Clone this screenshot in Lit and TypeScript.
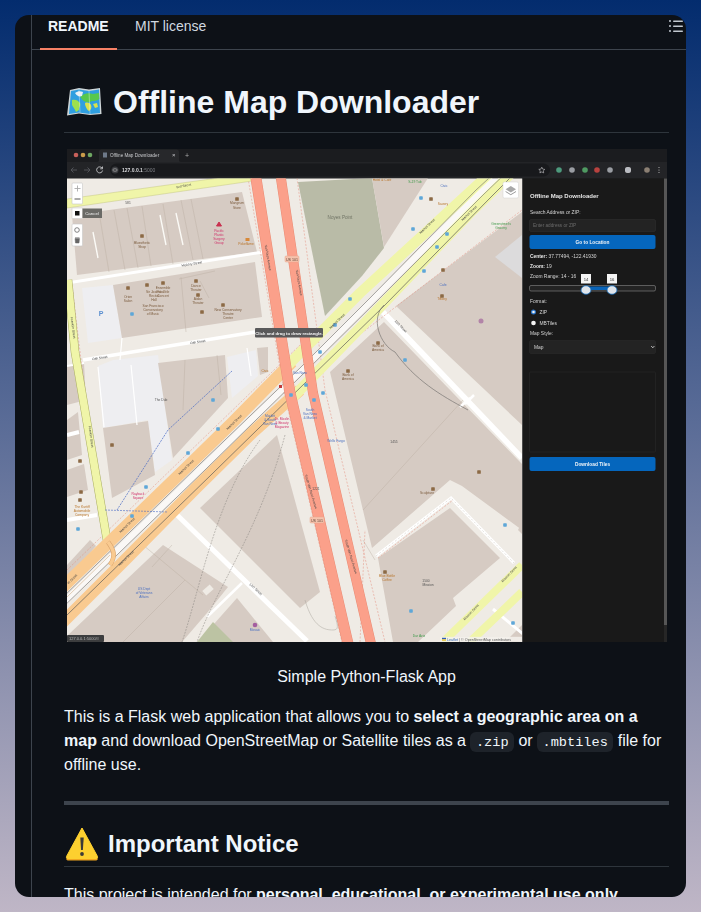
import { LitElement, html, css, svg } from "lit";
import { customElement } from "lit/decorators.js";

type Lbl = [number, number, string, number?, string?, number?];
const BROWN = "#7a5a3c", BLUE = "#4a6fc0", RED = "#d0306a", GREY = "#555", ORG = "#b8742a", GRN = "#3f9a4a";

const labels: Lbl[] = [
  [184, 187, "Fell Street", -12], [192, 265, "Hickory Street", -9], [198, 343, "Oak Street", -9], [100, 359, "Oak Street", -9],
  [267, 258, "Van Ness Avenue", 80], [298, 283, "Van Ness Avenue", 80], [72, 328, "Franklin Street", 82], [90, 437, "Franklin Street", 82],
  [340, 219, "Noyes Point", 0, "#6f7364", 4.6], [310, 492, "South Van Ness Avenue", 73], [350, 557, "South Van Ness Avenue", 73],
  [255, 590, "12th Street", 43], [472, 613, "Mission Street", -46], [510, 575, "Mission Street", -46], [400, 327, "11th Street", 46],
  [73, 580, "et Street", -44], [128, 526, "Market Street", -44], [187, 468, "Market Street", -44], [235, 423, "Market Street", -44],
  [127, 559, "Market Street", -44], [428, 227, "Market Street", -44], [470, 214, "Market Street", -44], [338, 322, "Market Street", -44],
  [237, 204, "Mangrum", 0, BROWN], [237, 209, "Store", 0, BROWN], [219, 232, "Pacific", 0, RED], [219, 236, "Plastic", 0, RED], [219, 240, "Surgery", 0, RED], [219, 244, "Group", 0, RED],
  [246, 245, "Pokeflame", 0, ORG], [142, 244, "Bluesthetic", 0, BROWN], [142, 248, "Shop", 0, BROWN],
  [128, 298, "Orion", 0, BROWN], [128, 302, "Salon", 0, BROWN], [154, 293, "Sir Jason's", 0, BROWN], [154, 297, "Recital", 0, BROWN], [154, 301, "Hall", 0, BROWN],
  [163, 289, "Ensemble", 0, BROWN], [163, 293, "Parallèle", 0, BROWN], [163, 297, "Concert", 0, BROWN],
  [153, 307, "San Francisco", 0, BROWN], [153, 311, "Conservatory", 0, BROWN], [153, 315, "of Music", 0, BROWN],
  [196, 287, "Dance", 0, BROWN], [196, 291, "Theater", 0, BROWN], [198, 300, "Aidan", 0, BROWN], [198, 304, "Theater", 0, BROWN],
  [228, 311, "New Conservatory", 0, BROWN], [228, 315, "Theatre", 0, BROWN], [228, 319, "Center", 0, BROWN],
  [265, 372, "Civic", 0, ORG], [348, 376, "Bank of", 0, BROWN], [348, 380, "America", 0, BROWN], [300, 374, "Van Ness", 0, BLUE],
  [382, 181, "Hotel & Café", 0, ORG], [415, 183, "S-19 Tub", 0, GRN], [444, 187, "Civic", 0, BLUE], [443, 205, "Savory", 0, ORG], [442, 300, "Tiffany", 0, ORG], [443, 286, "Cafe", 0, BLUE],
  [501, 225, "Greenstreet's", 0, GRN], [501, 229, "Grocery", 0, GRN], [378, 347, "Bank of", 0, BROWN], [378, 351, "America", 0, BROWN],
  [161, 401, "The Dub", 0, GREY], [270, 417, "Market", 0, BLUE], [270, 421, "& South", 0, BLUE], [270, 425, "Van Ness", 0, BLUE],
  [282, 420, "Dr. Maslin", 0, RED], [282, 424, "& Beauty", 0, RED], [282, 428, "Magazine", 0, RED], [310, 411, "South", 0, BLUE], [310, 415, "Van Ness", 0, BLUE], [310, 419, "& Market", 0, BLUE],
  [336, 442, "Wells Fargo", 0, BLUE], [138, 495, "Rayback", 0, RED], [138, 499, "Square", 0, RED], [82, 508, "The Kurtiff", 0, ORG], [82, 512, "Automobile", 0, ORG], [82, 516, "Company", 0, ORG],
  [144, 590, "US Dept", 0, BLUE], [144, 594, "of Veterans", 0, BLUE], [144, 598, "Affairs", 0, BLUE], [255, 631, "Mosaic", 0, BLUE], [427, 494, "Sculpture", 0, BROWN], [387, 577, "Blue Bottle", 0, ORG], [387, 581, "Coffee", 0, ORG],
  [426, 582, "1500", 0, GREY], [428, 586, "Mission", 0, GREY], [419, 637, "Dar Aziz", 0, GRN], [394, 443, "1455", 0, GREY], [128, 204, "581", 0, GREY], [316, 490, "1221", 0, GREY],
];

const tanBuildings = [
  "72,215 242,192 257,252 77,275", "113,285 255,262 262,317 122,338", "158,363 225,355 228,398 173,458",
  "103,428 148,421 155,475 112,498", "372,178 428,178 384,247", "396,306 500,228 522,212 522,425",
  "330,372 384,322 522,464 522,530 462,486 450,480 372,548", "378,558 450,508 500,558 453,598 456,606 418,642 393,642",
  "200,508 277,435 320,592 300,608", "67,636 163,545 228,587 207,613 182,642 67,642", "198,642 237,598 273,642",
  "257,348 268,347 268,372 260,375", "67,565 90,540 96,546 67,580", "67,420 78,412 82,455 67,460", "67,470 84,464 88,490 67,497",
  "67,366 84,363 86,400 67,405", "505,642 522,625 522,642", "522,522 518,530 522,534",
];

const blueIcons = [[132, 314], [350, 299], [335, 325], [320, 352], [291, 395], [306, 385], [314, 400], [323, 393], [213, 400],
  [132, 516], [146, 487], [188, 453], [218, 429], [78, 529], [421, 198], [413, 229], [447, 234], [437, 247], [424, 271], [405, 360], [411, 611], [513, 623], [505, 525]];
const brownIcons = [[237, 199], [142, 236], [128, 288], [147, 285], [163, 283], [196, 281], [198, 295], [202, 312], [223, 305], [431, 199], [443, 270], [442, 296], [378, 343], [348, 371], [433, 489], [479, 472], [385, 572], [112, 445], [80, 461], [80, 500], [81, 492]];

const sep = [[74, 155], [83, 155], [90, 155]];
const dotColors = ["#c8605a", "#c99b4a", "#6fa863"];
const ext = [[559, "#4d9a7d"], [572, "#9a9da3"], [585, "#4f9a62"], [597, "#b8423f"], [610, "#9a9da3"], [628, "#b9bcc2"], [647, "#8b7f73"]] as [number, string][];

const T = (x: number, y: number, t: string, cls = "s", extra = {} as { anchor?: string; fill?: string; size?: number; weight?: string }) =>
  svg`<text x=${x} y=${y} class=${cls} text-anchor=${extra.anchor ?? "start"} fill=${extra.fill ?? "#d6d6d6"} font-size=${extra.size ?? 4.9} font-weight=${extra.weight ?? "400"}>${t}</text>`;

const screenshot = svg`
<svg class="shot" width="600" height="493" viewBox="67 149 600 493" role="img" aria-label="Screenshot of Offline Map Downloader">
  <rect x="67" y="149" width="600" height="493" fill="#1b1c1f"/>
  <!-- browser tabs -->
  ${sep.map((p, i) => svg`<circle cx=${p[0] + (i === 0 ? 2 : 0)} cy=${p[1]} r="2.3" fill=${dotColors[i]}/>`)}
  <path d="M97 162c1.500 0 2-1 2-2v-8c0-1.500 1-2.500 2.500-2.500h75c1.500 0 2.500 1 2.500 2.500v8c0 1 .5 2 2 2z" fill="#27282b"/>
  <rect x="103" y="152.500" width="4" height="5" fill="#6f7a8a"/>
  ${T(110, 157, "Offline Map Downloader", "s", { fill: "#c8c9cc", size: 4.6 })}
  ${T(172, 157.300, "×", "s", { fill: "#c8c9cc", size: 6 })}
  ${T(185, 157.500, "+", "s", { fill: "#aaa", size: 7 })}
  <!-- toolbar -->
  <rect x="67" y="162" width="600" height="16.500" fill="#232427"/>
  <rect x="110" y="163.500" width="440" height="13" rx="6.500" fill="#18191c"/>
  <path d="M71 170h6M71 170l2.500-2.500M71 170l2.500 2.500" stroke="#55575c" fill="none" stroke-width=".9"/>
  <path d="M90 170h-6M90 170l-2.500-2.500M90 170l-2.500 2.500" stroke="#55575c" fill="none" stroke-width=".9"/>
  <path d="M102 168a3 3 0 1 0 .6 2.500M102.500 166.500v2.300h-2.300" stroke="#c6c7ca" fill="none" stroke-width=".9"/>
  <circle cx="115" cy="170" r="3.500" fill="#3a3b3f"/><rect x="113" y="168.800" width="4" height="2.400" rx="1" fill="none" stroke="#bbb" stroke-width=".6"/>
  <text x="122" y="171.800" class="s" font-size="5" fill="#d8d9dc" font-weight="700">127.0.0.1<tspan fill="#7d7f84" font-weight="400">:5000</tspan></text>
  <path d="M541.800 167.200l.9 1.900 2.100.3-1.500 1.400.4 2.100-1.900-1-1.900 1 .4-2.100-1.500-1.400 2.100-.3z" fill="none" stroke="#c9cacd" stroke-width=".6"/>
  ${ext.map(([x, c]) => svg`<circle cx=${x} cy="170" r="2.800" fill=${c}/>`)}
  <rect x="625.500" y="167.500" width="5" height="5" rx="1" fill="none" stroke="#c6c7ca" stroke-width=".8"/>
  <circle cx="659" cy="167.500" r=".6" fill="#bbb"/><circle cx="659" cy="170" r=".6" fill="#bbb"/><circle cx="659" cy="172.500" r=".6" fill="#bbb"/>

  <!-- map -->
  <svg x="67" y="178.500" width="455" height="463.500" viewBox="67 178.500 455 463.500">
    <rect x="67" y="178" width="455" height="464" fill="#efebe5"/>
    <polygon points="298,182 372,178 384,248 362,276 325,316" fill="#b9bba7"/>
    <polygon points="98,366 113,360 158,355 172,460 155,472 148,420 103,428" fill="#eeeef1"/>
    <polygon points="82,288 113,285 122,338 88,343" fill="#eeeef1"/>
    <polygon points="227,357 256,350 258,376 232,398" fill="#eeeef1"/>
    ${tanBuildings.map((p) => svg`<polygon points=${p} fill="#d6cbc3"/>`)}
    <polygon points="495,257 522,235 522,278" fill="#dcdbdc"/>
    <polygon points="197,642 213,622 233,642" fill="#bcc3a3"/>
    <!-- building separators -->
    <g stroke="#b9ac9f" stroke-width=".4" fill="none">
      <path d="M99 212l10 60M114 210l11 60M127 208l11 60M142 206l9 60M163 204l10 60M181 200l12 60M191 199l12 60"/>
      <path d="M181 277l5 55M200 281l9 17M215 271l-36 8"/>
      <path d="M217 355l4 40M185 360l-2 50"/>
      <path d="M120 645l65-65M143 545l60 50M172 545l-20 22M375 560l-12-20"/>
      <path d="M363 510l100-110"/>
    </g>
    <g stroke="#fbfaf6" stroke-linecap="butt" fill="none">
      <path d="M93 232l5 26M160 215l6 30M176 213l7 32" stroke-width="1.400"/>
    </g>
    <!-- small white streets -->
    <g stroke="#ffffff" fill="none" stroke-linecap="butt">
      <path d="M67 283L263 252" stroke-width="2.800"/>
      <path d="M83 360L255 332" stroke-width="3.600"/>
      <path d="M67 366L84 363" stroke-width="2"/>
      <path d="M67 435l12-3M67 520l30-5" stroke-width="4"/>
      <path d="M175 513L307 641" stroke-width="5"/>
      <path d="M207 617L242 583" stroke-width="2.500"/>
      <path d="M383 312L522 458" stroke-width="5.500"/>
      <path d="M470 398l-10 9M474 395l-9 9" stroke-width="2.500"/>
      <path d="M376 556L451 498L514 563" stroke-width="3"/>
      <path d="M493 609l30 25" stroke-width="3"/>
      <path d="M122 338L120 360M131 365l6 60M98 367l6 60M247 348l4 28" stroke-width="1.200"/>
    </g>
    <path d="M376 556L451 498L514 563" stroke="#c8c4bf" stroke-width=".5" stroke-dasharray="2 2" fill="none"/>
    <!-- boundary dashed red -->
    <g stroke="#e58f7e" stroke-width=".5" stroke-dasharray="2 1.500" fill="none">
      <path d="M248 178l36 214 58 250M297 178l28 212 60 252M67 205L240 180M72 285l12 100 28 175"/>
      <path d="M75 605L320 365L522 210M67 570L300 345M378 558l75-58M360 642L365 530"/>
    </g>
    <!-- Franklin -->
    <path d="M68 280L75 352L107 540" stroke="#a9ad62" stroke-width="8.500" fill="none"/>
    <path d="M68 280L75 352L107 540" stroke="#f0f5a9" stroke-width="7.500" fill="none"/>
    <!-- Fell -->
    <polygon points="67,199 218,178 252,178 252,181 67,208" fill="#f0f5a9" stroke="#babd75" stroke-width=".4"/>
    <!-- Market -->
    <g fill="none" stroke-linejoin="round">
      <path d="M60 590L187 467L233 422L292 362" stroke="#f9ca90" stroke-width="12"/>
      <path d="M60 625L127 558L197 487L253 432L300 390" stroke="#f9ca90" stroke-width="12"/>
      <path d="M284 369L360 293L485 178L535 132" stroke="#f0f5a9" stroke-width="10.500"/>
      <path d="M292 398L360 328L470 213L530 155" stroke="#f0f5a9" stroke-width="10.500"/>
      <path d="M60 606L200 470L300 372L372 300L478 195L530 145" stroke="#ffffff" stroke-width="6" opacity=".65"/>
      <path d="M60 600L200 464L300 368L370 298L476 190L525 145" stroke="#6e6c69" stroke-width=".6"/>
      <path d="M60 610L205 470L302 375L378 300L484 194L530 150" stroke="#6e6c69" stroke-width=".6"/>
      <path d="M66 616L212 474L306 382L384 306L490 198L530 158" stroke="#5d5b58" stroke-width=".7"/>
      <path d="M384 305C370 318 380 345 395 352C415 380 440 395 468 410" stroke="#797673" stroke-width=".7"/>
      <path d="M108 542C114 550 116 556 110 565" stroke="#d9a46c" stroke-width="4.600"/>
      <path d="M108 542C114 550 116 556 110 565" stroke="#f9ca90" stroke-width="3.600"/>
      <path d="M110 555L67 597" stroke="#c79f70" stroke-width=".5"/>
      <path d="M232 371L168 430L117 510" stroke="#4668c4" stroke-width=".7" stroke-dasharray="2 1"/>
      <path d="M105 510L168 512" stroke="#4668c4" stroke-width=".6" stroke-dasharray="2 1"/>
    </g>
    <!-- Mission -->
    <path d="M443 642L522 565" stroke="#f0f5a9" stroke-width="8" fill="none"/>
    <path d="M470 642L522 592" stroke="#f0f5a9" stroke-width="8" fill="none"/>
    <!-- Van Ness -->
    <g fill="none" stroke-linejoin="round">
      <path d="M255 172L290 393L349 648" stroke="#e98d76" stroke-width="11"/>
      <path d="M255 172L290 393L349 648" stroke="#fba08a" stroke-width="10"/>
      <path d="M280 172L313 393L372 648" stroke="#e98d76" stroke-width="10"/>
      <path d="M280 172L313 393L372 648" stroke="#fba08a" stroke-width="9"/>
    </g>
    <!-- dashed trails at the bottom -->
    <g fill="none" stroke="#85817c" stroke-width=".5" stroke-dasharray="1.800 1.200">
      <path d="M260 440C215 500 200 590 182 642M285 435C260 530 215 590 197 642"/>
      <path d="M305 600c8 28 20 30 28 30 6 0 5-4 2-14" stroke="#aaa69f" stroke-dasharray="none"/>
    </g>
    <rect x="205" y="585" width="6" height="10" transform="rotate(48 208 590)" fill="#efebe5"/>
    <!-- icons -->
    ${blueIcons.map(([x, y]) => svg`<rect x=${x - 1.800} y=${y - 1.800} width="3.600" height="3.600" rx=".8" fill="#5ea7d8"/>`)}
    ${brownIcons.map(([x, y]) => svg`<rect x=${x - 1.800} y=${y - 1.800} width="3.600" height="3.600" rx=".6" fill="#8c6a45"/>`)}
    <path d="M219 222l2.500 4h-5z" fill="#c9304f" stroke="#c9304f"/>
    <rect x="245.500" y="238" width="4" height="3" fill="#d78839"/><rect x="279" y="385" width="3" height="3" fill="#c23a3a"/>
    <text x="101" y="316" class="s" font-size="7" fill="#5a8fd0" font-weight="700" text-anchor="middle">P</text>
    <circle cx="255" cy="625" r="2.300" fill="#a45ea0"/><circle cx="481" cy="321" r="2.500" fill="#b284a8"/>
    <!-- labels -->
    ${labels.map(([x, y, t, rot, fill, size]) => svg`<text x=${x} y=${y} class="s" text-anchor="middle" font-size=${size ?? 3.300} fill=${fill ?? "#454545"} transform=${rot ? `rotate(${rot} ${x} ${y})` : ""}>${t}</text>`)}
    <rect x="285" y="256" width="14" height="6" rx="1" fill="#f6c3ad" stroke="#e7a48c" stroke-width=".5"/>
    <text x="292" y="260.500" class="s" text-anchor="middle" font-size="3.600" fill="#5a4032">US 101</text>
    <rect x="310" y="517" width="14" height="6" rx="1" fill="#f6c3ad" stroke="#e7a48c" stroke-width=".5"/>
    <text x="317" y="521.500" class="s" text-anchor="middle" font-size="3.600" fill="#5a4032">US 101</text>
    <!-- drawing controls -->
    <rect x="72" y="183" width="10.500" height="21" rx="1" fill="#fff" stroke="#c8c8c8" stroke-width=".6"/>
    <path d="M74.500 188.500h6M77.500 185.500v6" stroke="#aaa" stroke-width=".9"/><path d="M74.500 199h6" stroke="#444" stroke-width=".9"/>
    <rect x="72" y="208" width="10.500" height="10.500" fill="#fff" stroke="#c8c8c8" stroke-width=".5"/>
    <rect x="75" y="211" width="4.500" height="4.500" fill="#111"/>
    <rect x="82.500" y="208.500" width="19.500" height="9.500" fill="#6a6a66"/>
    <text x="92" y="214.800" class="s" text-anchor="middle" font-size="4.400" fill="#f2f2f2">Cancel</text>
    <rect x="72" y="224" width="10.500" height="22" rx="1" fill="#fff" stroke="#c8c8c8" stroke-width=".6"/>
    <circle cx="77" cy="230" r="2.300" fill="none" stroke="#666" stroke-width=".8"/>
    <path d="M75 238.500h4.500l-.5 4.500h-3.500z M75 237.500h4.500" fill="#666" stroke="#666" stroke-width=".5"/>
    <rect x="503" y="182" width="15.500" height="16" rx="1.500" fill="#fff" stroke="#d0d0d0" stroke-width=".5"/>
    <path d="M510.800 186l5.200 3.200-5.200 3.200-5.200-3.200z" fill="#a8a8a8"/><path d="M505.600 191.500l5.200 3.200 5.200-3.200" fill="none" stroke="#8f8f8f" stroke-width=".9"/>
    <rect x="255" y="328" width="68" height="9.500" rx="1" fill="#59595a"/>
    <text x="289" y="334.600" class="s" text-anchor="middle" font-size="4.300" font-weight="700" fill="#f4f4f4">Click and drag to draw rectangle.</text>
    <rect x="440" y="636.800" width="82" height="5" fill="#f3f1ec" opacity=".85"/>
    <rect x="442" y="637.800" width="4" height="1.500" fill="#2f5fb7"/><rect x="442" y="639.300" width="4" height="1.500" fill="#e8c53a"/>
    <text x="447" y="640.800" class="s" font-size="3.700" fill="#555"><tspan fill="#3a6bb8">Leaflet</tspan> | © OpenStreetMap contributors</text>
    <rect x="67" y="635" width="37" height="7" rx="1" fill="#3c3d3e"/>
    <text x="69" y="640.300" class="s" font-size="4" fill="#b5b5b5">127.0.0.1:5000/#</text>
  </svg>

  <!-- sidebar -->
  <rect x="522" y="178.500" width="145" height="463.500" fill="#191919"/>
  <rect x="522" y="178.500" width="1" height="463.500" fill="#4c4c4c"/>
  <rect x="664" y="178.500" width="3" height="447" fill="#565656"/>
  <rect x="664" y="625" width="3" height="17" fill="#262626"/>
  ${T(530, 198, "Offline Map Downloader", "s", { size: 6, weight: "700", fill: "#e6e6e6" })}
  ${T(530, 214, "Search Address or ZIP:")}
  <rect x="529.500" y="219.500" width="126" height="12" rx="1.500" fill="#232323" stroke="#2f2f2f" stroke-width=".6"/>
  ${T(533, 227.300, "Enter address or ZIP", "s", { fill: "#6b6b6b", size: 4.700 })}
  <rect x="529.500" y="235" width="126" height="14" rx="2" fill="#0566bd"/>
  ${T(592.500, 243.800, "Go to Location", "s", { anchor: "middle", fill: "#eef3f8", size: 4.800, weight: "700" })}
  <text x="530" y="257.800" class="s" font-size="4.900" fill="#d6d6d6"><tspan font-weight="700" fill="#e8e8e8">Center:</tspan> 37.77494, -122.41930</text>
  <text x="530" y="267.800" class="s" font-size="4.900" fill="#d6d6d6"><tspan font-weight="700" fill="#e8e8e8">Zoom:</tspan> 19</text>
  ${T(530, 277.800, "Zoom Range: 14 - 16")}
  <rect x="529.500" y="285.500" width="126" height="5.500" rx="1.500" fill="#232323" stroke="#8a8a8a" stroke-width=".6"/>
  <rect x="586" y="286.500" width="26" height="3.500" fill="#0a64b8"/>
  <rect x="581" y="274" width="10" height="9.500" fill="#f4f4f4"/><rect x="607" y="274" width="10" height="9.500" fill="#f4f4f4"/>
  ${T(586, 280.800, "14", "s", { anchor: "middle", fill: "#333", size: 4.200 })}
  ${T(612, 280.800, "16", "s", { anchor: "middle", fill: "#333", size: 4.200 })}
  <ellipse cx="586" cy="290" rx="5" ry="4.300" fill="#dfe4ea" stroke="#0a64b8" stroke-width=".8"/>
  <ellipse cx="612" cy="290" rx="5" ry="4.300" fill="#dfe4ea" stroke="#0a64b8" stroke-width=".8"/>
  ${T(530, 303, "Format:")}
  <circle cx="533.500" cy="312" r="1.900" fill="#f2f2f2" stroke="#2b78d0" stroke-width="1.200"/>
  ${T(539.500, 313.800, "ZIP")}
  <circle cx="533.500" cy="323" r="2.300" fill="#f4f4f4"/>
  ${T(539.500, 324.800, "MBTiles")}
  ${T(530, 335, "Map Style:")}
  <rect x="529.500" y="340.500" width="126" height="13" rx="1.500" fill="#232323" stroke="#2b2b2b" stroke-width=".6"/>
  ${T(534, 348.800, "Map")}
  <path d="M651.200 346l1.600 1.800 1.600-1.800" fill="none" stroke="#ddd" stroke-width=".8"/>
  <rect x="529.500" y="372" width="126" height="80" rx="1" fill="#191919" stroke="#2a2a2a" stroke-width=".6"/>
  <rect x="529.500" y="457" width="126" height="14" rx="2" fill="#0566bd"/>
  ${T(592.500, 465.800, "Download Tiles", "s", { anchor: "middle", fill: "#eef3f8", size: 4.800, weight: "700" })}
</svg>`;

@customElement("app-root")
export class AppRoot extends LitElement {
  static styles = css`
    :host {
      display: block;
      height: 912px;
      overflow: hidden;
      box-sizing: border-box;
      padding: 15px;
      background: linear-gradient(180deg, #032c6e 0%, #bfb6c6 100%);
      font-family: "Liberation Sans", Arial, sans-serif;
      color: #f0f6fc;
    }
    .card {
      width: 671px;
      height: 882px;
      border-radius: 14px;
      overflow: hidden;
      background: #0d1117;
      display: flex;
    }
    .gutter { flex: 0 0 16px; border-right: 1px solid #3d444d; }
    .main { flex: 0 0 669px; }
    .tabs {
      height: 35px;
      box-sizing: border-box;
      border-bottom: 1px solid #3d444d;
      display: flex;
      justify-content: space-between;
      padding: 0 17px 0 8px;
    }
    .tablist { display: flex; gap: 10px; }
    .tab {
      height: 35px;
      box-sizing: border-box;
      padding: 3px 8px 0;
      min-width: 77px;
      font-size: 14px;
      line-height: 16px;
      color: #d1d9e0;
    }
    .tab.active { font-weight: 700; color: #f0f6fc; border-bottom: 2px solid #f78166; }
    .toc { margin-top: 2.500px; fill: #c1c8d0; }
    .body { padding: 32.400px 32px 0; font-size: 16px; line-height: 24px; }
    h1 {
      margin: 0 0 16px;
      font-size: 32px;
      line-height: 40px;
      font-weight: 700;
      padding-bottom: 9.600px;
      border-bottom: 1px solid #3d444db3;
      display: flex;
      align-items: center;
      gap: 11px;
    }
    h2 {
      margin: 24px 0 16px;
      font-size: 24px;
      line-height: 30px;
      font-weight: 700;
      padding-bottom: 7.700px;
      border-bottom: 1px solid #3d444db3;
      display: flex;
      align-items: center;
      gap: 9px;
    }
    .emoji { flex: none; margin-block: -6px; }
    .h1emoji { margin-left: 2px; }
    .h2emoji { margin-left: 1px; }
    .figure { display: flex; justify-content: center; }
    .shot { display: block; filter: blur(0.5px); }
    .s { font-family: "Liberation Sans", Arial, sans-serif; }
    .cap { margin: 22.600px 0 16px; text-align: center; }
    p { margin: 0 0 16px; }
    b { font-weight: 700; }
    code {
      font-family: "Liberation Mono", monospace;
      font-size: 13.600px;
      line-height: 1;
      padding: 2.700px 5.440px;
      border-radius: 6px;
      background: #656c7633;
    }
    hr { height: 4px; margin: 24px 0; border: 0; background: #3d444d; }
  `;

  render() {
    return html`
      <div class="card">
        <div class="gutter"></div>
        <div class="main">
          <div class="tabs">
            <div class="tablist">
              <div class="tab active">README</div>
              <div class="tab">MIT license</div>
            </div>
            <svg class="toc" width="16" height="16" viewBox="0 0 16 16" aria-hidden="true">
              <path d="M5.750 2.500h8.500a.75.75 0 0 1 0 1.500h-8.500a.75.75 0 0 1 0-1.500Zm0 5h8.500a.75.75 0 0 1 0 1.500h-8.500a.75.75 0 0 1 0-1.500Zm0 5h8.500a.75.75 0 0 1 0 1.500h-8.500a.75.75 0 0 1 0-1.500ZM2 14a1 1 0 1 1 0-2 1 1 0 0 1 0 2Zm1-6a1 1 0 1 1-2 0 1 1 0 0 1 2 0ZM2 4a1 1 0 1 1 0-2 1 1 0 0 1 0 2Z"/>
            </svg>
          </div>
          <div class="body">
            <h1>
              <svg class="emoji h1emoji" width="36" height="30" viewBox="0 0 36 30" aria-hidden="true">
                <path d="M4 3L13 1L23 2.500L34 1L35.500 27L24 28L13 26.500L1 28.500z" fill="#cfd6d8"/>
                <path d="M5 4L13 2.500L23 4L33 2.500L34 26L24 27L13 25.500L3 27z" fill="#2f9fe0"/>
                <path d="M14 10c3-3 8-5 13-3l6-1 .3 6c-4 3-7 1-9 3-3 1-7 0-10-5z" fill="#57c84d"/>
                <path d="M6 13c3-1 6 0 8 3 1 3-1 4-1 7l-3 2c-1-3-3-5-4-7z" fill="#9ee04d"/>
                <path d="M19 16c3-1 5 0 6 2s0 5-2 6c-2-1-4-5-4-8zM27 17l4-1 1 4-3 1z" fill="#d9e24a"/>
                <path d="M9 6c3-2 5-2 8-1l-1 4c-3 1-5 0-7-3z" fill="#e8f1f5"/>
                <path d="M13 2.500l1 23M23 4l1 23" stroke="#ffffff" stroke-opacity=".35" stroke-width="1"/>
              </svg>
              <span>Offline Map Downloader</span>
            </h1>
            <div class="figure">${screenshot}</div>
            <p class="cap">Simple Python-Flask App</p>
            <p>This is a Flask web application that allows you to <b>select a geographic area on a map</b> and download OpenStreetMap or Satellite tiles as a <code>.zip</code> or <code>.mbtiles</code> file for offline use.</p>
            <hr />
            <h2>
              <svg class="emoji h2emoji" width="34" height="36" viewBox="0 0 34 36" aria-hidden="true">
                <path d="M17 2L32.500 32c.6 1.300-.1 2.500-1.500 2.500H3c-1.400 0-2.100-1.200-1.500-2.500z" fill="#f0a51e"/>
                <path d="M17 2L32.500 30.500c.4 1-.2 2-1.300 2H2.800c-1.100 0-1.700-1-1.300-2z" fill="#fdd02f" stroke="#fdd02f" stroke-linejoin="round"/>
                <path d="M15.300 11.500h3.400l-.8 12.500h-1.800z" fill="#3c3a37"/>
                <circle cx="17" cy="28" r="1.900" fill="#3c3a37"/>
              </svg>
              <span>Important Notice</span>
            </h2>
            <p>This project is intended for <b>personal, educational, or experimental use only</b>.</p>
          </div>
        </div>
      </div>
    `;
  }
}
